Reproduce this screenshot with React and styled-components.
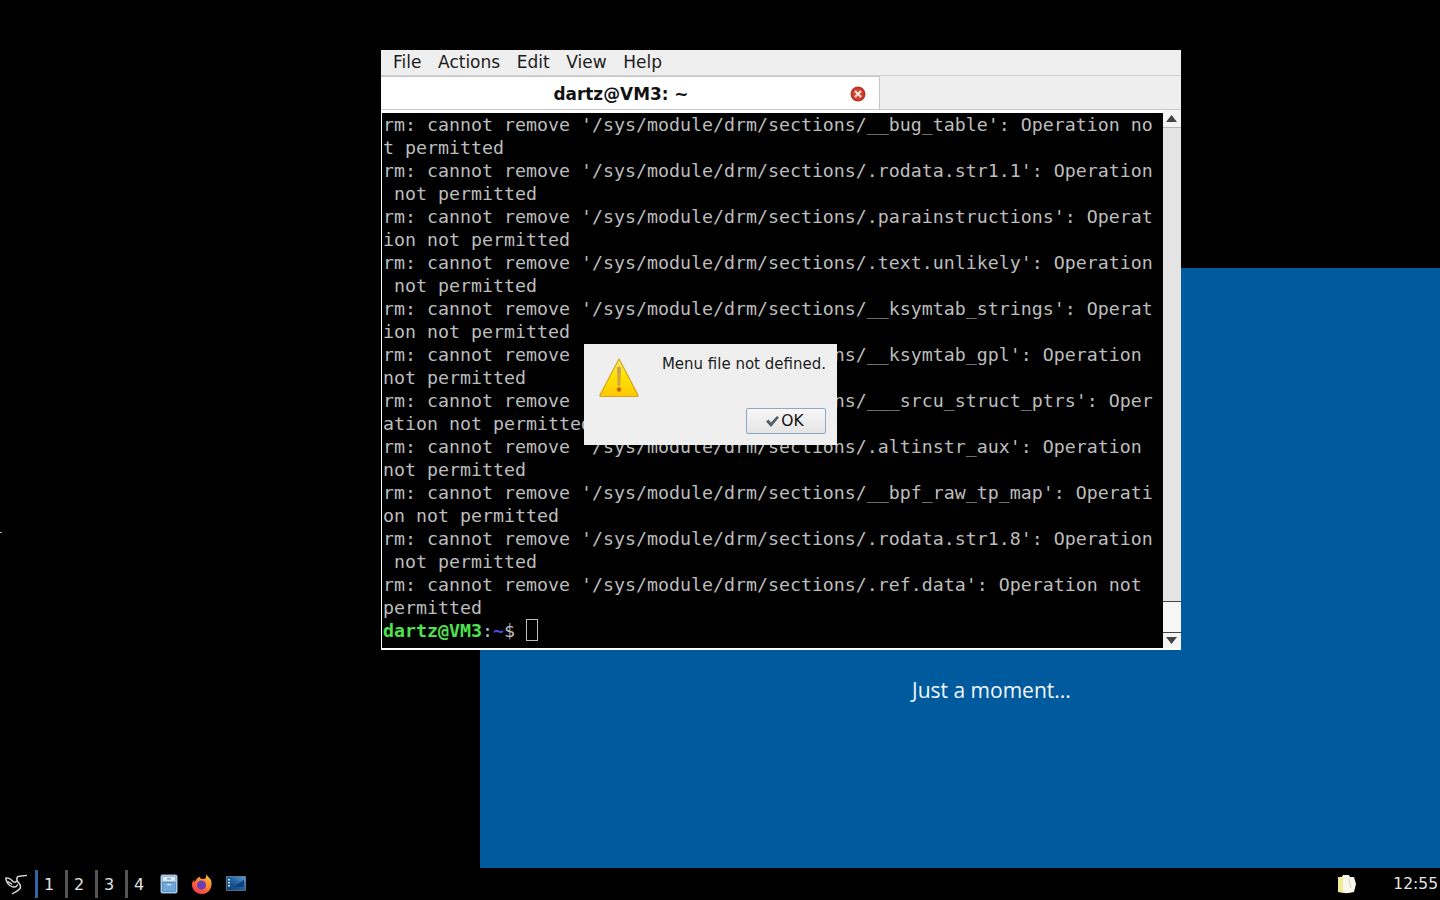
import React from 'react'
import styled, { createGlobalStyle } from 'styled-components'

const lines = [
  "rm: cannot remove '/sys/module/drm/sections/__bug_table': Operation no",
  't permitted',
  "rm: cannot remove '/sys/module/drm/sections/.rodata.str1.1': Operation",
  ' not permitted',
  "rm: cannot remove '/sys/module/drm/sections/.parainstructions': Operat",
  'ion not permitted',
  "rm: cannot remove '/sys/module/drm/sections/.text.unlikely': Operation",
  ' not permitted',
  "rm: cannot remove '/sys/module/drm/sections/__ksymtab_strings': Operat",
  'ion not permitted',
  "rm: cannot remove '/sys/module/drm/sections/__ksymtab_gpl': Operation",
  'not permitted',
  "rm: cannot remove '/sys/module/drm/sections/___srcu_struct_ptrs': Oper",
  'ation not permitted',
  "rm: cannot remove '/sys/module/drm/sections/.altinstr_aux': Operation",
  'not permitted',
  "rm: cannot remove '/sys/module/drm/sections/__bpf_raw_tp_map': Operati",
  'on not permitted',
  "rm: cannot remove '/sys/module/drm/sections/.rodata.str1.8': Operation",
  ' not permitted',
  "rm: cannot remove '/sys/module/drm/sections/.ref.data': Operation not",
  'permitted',
]

const GlobalStyle = createGlobalStyle`
  html, body { margin: 0; padding: 0; background: #000; overflow: hidden; }
  #root { width: 1440px; height: 900px; }
`

const Screen = styled.div`
  width: 1440px;
  height: 900px;
  display: flex;
  flex-direction: column;
  background: #000;
  font-family: "DejaVu Sans", sans-serif;
`

const Desktop = styled.div`
  position: relative;
  height: 868px;
`

const GuestPanel = styled.div`
  position: absolute;
  left: 480px;
  top: 268px;
  width: 960px;
  height: 600px;
  background: #005a9e;
`

const MomentText = styled.div`
  position: absolute;
  left: 432px;
  top: 407px;
  color: #f2f7fb;
  font-family: "Open Sans", sans-serif;
  font-weight: 400;
  font-size: 21px;
  line-height: 30px;
  white-space: nowrap;
`

const Speck = styled.div`
  position: absolute;
  left: 0;
  top: 532px;
  width: 2px;
  height: 1px;
  background: #bbb;
`

const Terminal = styled.div`
  position: absolute;
  left: 381px;
  top: 50px;
  width: 800px;
  height: 600px;
  display: flex;
  flex-direction: column;
  background: #f0f0f0;
`

const MenuBar = styled.div`
  height: 26px;
  flex: none;
  box-sizing: border-box;
  display: flex;
  align-items: center;
  gap: 16.6px;
  padding: 0 12px 1px;
  background: #efefef;
  color: #1c1c1c;
  font-size: 17px;
  border-bottom: 1px solid #cfcfcf;
`

const TabRow = styled.div`
  height: 34px;
  flex: none;
  box-sizing: border-box;
  display: flex;
  background: #eeeeee;
  border-bottom: 1px solid #c9c9c9;
`

const Tab = styled.div`
  position: relative;
  width: 499px;
  display: flex;
  align-items: center;
  justify-content: center;
  padding: 1px 18px 0 0;
  box-sizing: border-box;
  background: #fff;
  border-right: 1px solid #c6c6c6;
  border-top: 1px solid #c6c6c6;
  color: #111;
  font-weight: 700;
  font-size: 16.9px;
`

const CloseIcon = styled.svg`
  position: absolute;
  right: 13px;
  top: 9px;
`

const TermBody = styled.div`
  flex: 1;
  min-height: 0;
  display: flex;
  background: #fff;
  padding: 0 0 2px 1px;
`

const TermText = styled.div`
  width: 781px;
  margin-top: 3px;
  background: #000;
  padding-left: 1px;
  box-sizing: border-box;
  overflow: hidden;
  color: #bdbdbd;
  font-family: "DejaVu Sans Mono", monospace;
  font-size: 18.27px;
  line-height: 23px;
`

const TermLine = styled.div`
  height: 23px;
  white-space: pre;
`

const PromptUser = styled.span`
  color: #4fe04f;
  font-weight: 700;
`

const PromptPath = styled.span`
  color: #4a4ae0;
  font-weight: 700;
`

const Cursor = styled.span`
  display: inline-block;
  width: 10px;
  height: 20px;
  margin-left: 11px;
  border: 1px solid #bdbdbd;
  vertical-align: -4px;
`

const Scrollbar = styled.div`
  flex: 1;
  display: flex;
  flex-direction: column;
  background: #e6e6e6;
`

const ScrollArrow = styled.div`
  height: ${p => p.$height}px;
  flex: none;
  box-sizing: border-box;
  display: flex;
  align-items: center;
  justify-content: center;
  padding-right: 2px;
  background: #f4f4f4;
  border-bottom: ${p => (p.$ruled ? '1px solid #b5b5b5' : 'none')};
`

const ScrollTrack = styled.div`
  flex: 1;
  background: #e4e4e4;
`

const ScrollThumb = styled.div`
  height: 30px;
  flex: none;
  background: #f6f6f6;
  border-top: 1px solid #444;
  border-bottom: 1px solid #444;
`

const Dialog = styled.div`
  position: absolute;
  left: 584px;
  top: 344px;
  width: 253px;
  height: 101px;
  box-sizing: border-box;
  padding: 10px 11px 11px 14px;
  background: #efefef;
  display: flex;
  flex-direction: column;
  justify-content: space-between;
`

const DialogTop = styled.div`
  display: flex;
  justify-content: space-between;
  align-items: flex-start;
`

const WarningBox = styled.div`
  margin-top: 4px;
  height: 38px;
`

const DialogText = styled.div`
  color: #1c1c1c;
  font-size: 15px;
  line-height: 20px;
  white-space: nowrap;
`

const DialogActions = styled.div`
  display: flex;
  justify-content: flex-end;
`

const OkButton = styled.div`
  width: 80px;
  height: 26px;
  box-sizing: border-box;
  display: flex;
  align-items: center;
  justify-content: center;
  gap: 1px;
  padding-right: 3px;
  background: linear-gradient(#f8f8f8, #e4e4e4);
  border: 1px solid #8fa9c4;
  border-radius: 2px;
  color: #111;
  font-size: 15.5px;
`

const Taskbar = styled.div`
  height: 32px;
  flex: none;
  display: flex;
  align-items: center;
  background: #000;
  color: #e4e4e4;
  font-size: 16px;
`

const BirdSvg = styled.svg`
  margin-left: 4px;
  flex: none;
`

const Workspaces = styled.div`
  display: flex;
  margin-left: 8px;
`

const Workspace = styled.div`
  width: 30px;
  height: 28px;
  box-sizing: border-box;
  border-left: 3px solid ${p => (p.$active ? '#3465a4' : '#555')};
  padding-left: 6px;
  display: flex;
  align-items: center;
`

const Launchers = styled.div`
  display: flex;
  align-items: center;
  gap: 13px;
  margin-left: 5px;
`

const Tray = styled.div`
  margin-left: auto;
  display: flex;
  align-items: center;
  gap: 36px;
  padding-right: 2px;
`

const Clock = styled.div`
  font-size: 15.5px;
`

const BirdLogo = () => (
  <BirdSvg width="23" height="24" viewBox="0 0 24 24" fill="none" stroke="#dcdcdc" strokeWidth="1.5" strokeLinecap="round">
    <path d="M24 3 16 4C13 4 13 7 14 9 16 12 18 13 17 16 16 19 12 20 9 22" />
    <path d="M2 6C3 5 6 6 8 8 10 10 12 11 13 9" />
    <path d="M2 6C2 10 5 14 9 15 11 15.5 13 15 14 13" />
    <path d="M4 9.500 8 12" />
  </BirdSvg>
)

const FilesIcon = () => (
  <svg width="18" height="20" viewBox="0 0 18 20">
    <rect x="1" y="1" width="16" height="18" rx="1" fill="#cfe2f3" stroke="#8fb4d6" />
    <rect x="2.500" y="2.500" width="13" height="5" fill="#dfeaf4" stroke="#7fa3c4" strokeWidth=".7" />
    <rect x="2.500" y="8.500" width="13" height="9" fill="#6fa9dc" stroke="#3f7eb6" strokeWidth=".7" />
    <rect x="7" y="4.300" width="4" height="1.200" fill="#6d93b8" />
    <rect x="7" y="10" width="4" height="1.200" fill="#e6f0f8" />
  </svg>
)

const FirefoxIcon = () => (
  <svg width="22" height="22" viewBox="0 0 22 22">
    <defs>
      <linearGradient id="fx" x1="0.800" y1="0" x2="0.200" y2="1">
        <stop offset="0" stopColor="#ffcb3d" />
        <stop offset=".5" stopColor="#ff7a2b" />
        <stop offset="1" stopColor="#f0305a" />
      </linearGradient>
    </defs>
    <path d="M15 0c0 2 3 4 5 7 2 6-1 14-9.500 14C5 21 1 16.500 1 12c0-2 .8-4 1.800-5 0 1 .5 1.500 1 2C5 6 7 4 9 4c.5 2 2 3 3.500 3C15 5.500 16 3 15 0Z" fill="url(#fx)" />
    <circle cx="10.500" cy="12" r="4.500" fill="#6a3fb5" />
    <path d="M6 8.500c2-2 7-2 9 1 1 1.500 .8 4 0 5.500 2.500-.5 3.500-3.500 3-6C17 5.500 9.500 4 6 8.500Z" fill="#ff9a2b" />
  </svg>
)

const DesktopIcon = () => (
  <svg width="20" height="16" viewBox="0 0 20 16">
    <defs>
      <linearGradient id="dk" x1="0" y1="1" x2="1" y2="0">
        <stop offset="0" stopColor="#0d3a6e" />
        <stop offset=".5" stopColor="#1e5f9e" />
        <stop offset="1" stopColor="#5f9ccf" />
      </linearGradient>
    </defs>
    <rect x=".5" y=".5" width="19" height="14" fill="url(#dk)" stroke="#7f9fbf" strokeWidth=".6" />
    <rect x="2" y="3" width="2" height="1.500" fill="#cfe0ee" />
    <rect x="2" y="6" width="2" height="1.500" fill="#cfe0ee" />
    <rect x="2" y="9" width="2" height="1.500" fill="#cfe0ee" />
    <path d="M7 11 18 4v7Z" fill="#123f75" />
  </svg>
)

const NotesIcon = () => (
  <svg width="20" height="20" viewBox="0 0 20 20">
    <path d="M1 3h4l1-2h6l1 2h4l2 7-2 8c-5 1.500-10 1.500-16 0Z" fill="#f7f7ea" />
    <path d="M1 3h5v15H1Z" fill="#f1ec9a" />
    <path d="M12 5 14 14" stroke="#c9c9c9" strokeWidth=".8" />
  </svg>
)

const WarningIcon = () => (
  <svg width="42" height="40" viewBox="0 0 42 40">
    <defs>
      <linearGradient id="warn" x1="0" y1="0" x2="0" y2="1">
        <stop offset="0" stopColor="#ffe97a" />
        <stop offset=".4" stopColor="#ffe600" />
        <stop offset="1" stopColor="#fcc800" />
      </linearGradient>
    </defs>
    <path d="M21 1 40 37c.3 1-.2 1.500-1 1.500H3c-.8 0-1.300-.5-1-1.500Z" fill="url(#warn)" stroke="#d8a21e" strokeWidth="1.200" strokeLinejoin="round" />
    <path d="M18.800 9h4.400l-1 19h-2.400Z" fill="#d0a050" />
    <circle cx="21" cy="31.500" r="2.200" fill="#c8601a" />
  </svg>
)

const CheckIcon = () => (
  <svg width="15" height="13" viewBox="0 0 15 13">
    <path d="M1 6.500 3.500 4.500 6 7.500 12 1l2 1.500L6 12Z" fill="#55606b" />
  </svg>
)

const App = () => (
  <Screen>
    <GlobalStyle />
    <Desktop>
      <GuestPanel>
        <MomentText>Just a moment...</MomentText>
      </GuestPanel>
      <Speck />
      <Terminal>
        <MenuBar>
          <span>File</span>
          <span>Actions</span>
          <span>Edit</span>
          <span>View</span>
          <span>Help</span>
        </MenuBar>
        <TabRow>
          <Tab>
            dartz@VM3: ~
            <CloseIcon width="16" height="16" viewBox="0 0 16 16">
              <circle cx="8" cy="8" r="7.500" fill="#b83426" />
              <circle cx="8" cy="8" r="5.500" fill="#d9442f" />
              <path d="M5 5 11 11M11 5 5 11" stroke="#fbe9e4" strokeWidth="2" />
            </CloseIcon>
          </Tab>
        </TabRow>
        <TermBody>
          <TermText>
            {lines.map((line, i) => (
              <TermLine key={i}>{line}</TermLine>
            ))}
            <TermLine>
              <PromptUser>dartz@VM3</PromptUser>:<PromptPath>~</PromptPath>$
              <Cursor />
            </TermLine>
          </TermText>
          <Scrollbar>
            <ScrollArrow $height={18} $ruled>
              <svg width="11" height="7" viewBox="0 0 11 7"><path d="M5.500 0 11 7H0Z" fill="#444" /></svg>
            </ScrollArrow>
            <ScrollTrack />
            <ScrollThumb />
            <ScrollArrow $height={15}>
              <svg width="11" height="7" viewBox="0 0 11 7"><path d="M0 0h11L5.500 7Z" fill="#444" /></svg>
            </ScrollArrow>
          </Scrollbar>
        </TermBody>
      </Terminal>
      <Dialog>
        <DialogTop>
          <WarningBox><WarningIcon /></WarningBox>
          <DialogText>Menu file not defined.</DialogText>
        </DialogTop>
        <DialogActions>
          <OkButton><CheckIcon />OK</OkButton>
        </DialogActions>
      </Dialog>
    </Desktop>
    <Taskbar>
      <BirdLogo />
      <Workspaces>
        <Workspace $active>1</Workspace>
        <Workspace>2</Workspace>
        <Workspace>3</Workspace>
        <Workspace>4</Workspace>
      </Workspaces>
      <Launchers>
        <FilesIcon />
        <FirefoxIcon />
        <DesktopIcon />
      </Launchers>
      <Tray>
        <NotesIcon />
        <Clock>12:55</Clock>
      </Tray>
    </Taskbar>
  </Screen>
)

export default App
